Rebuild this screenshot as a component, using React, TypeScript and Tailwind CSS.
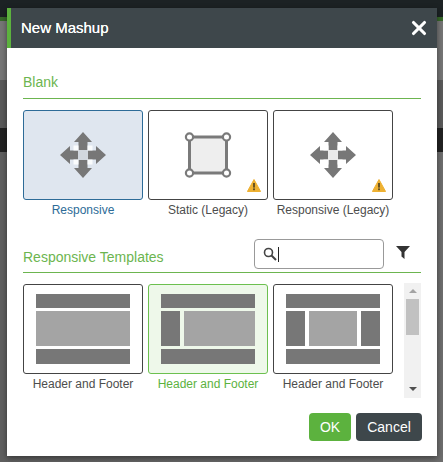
import { X } from 'lucide-react';

function MoveIcon() {
  return (
    <svg width="46" height="46" viewBox="0 0 46 46" fill="#777777">
      <path d="M23 0 L32 10 L27.5 10 L27.5 18 L18.5 18 L18.5 10 L14 10 Z" />
      <path d="M23 46 L32 36 L27.5 36 L27.5 28 L18.5 28 L18.5 36 L14 36 Z" />
      <path d="M0 23 L10 14 L10 18.5 L18 18.5 L18 27.5 L10 27.5 L10 32 Z" />
      <path d="M46 23 L36 14 L36 18.5 L28 18.5 L28 27.5 L36 27.5 L36 32 Z" />
      <rect x="18" y="18" width="10" height="10" fill="#9a9a9a" opacity="0.2" />
      <rect x="13.5" y="13.5" width="5" height="5" fill="#ffffff" opacity="0.85" />
      <rect x="27.5" y="13.5" width="5" height="5" fill="#ffffff" opacity="0.85" />
      <rect x="13.5" y="27.5" width="5" height="5" fill="#ffffff" opacity="0.85" />
      <rect x="27.5" y="27.5" width="5" height="5" fill="#ffffff" opacity="0.85" />
    </svg>
  );
}

function SquareIcon() {
  return (
    <svg width="48" height="48" viewBox="0 0 48 48">
      <rect x="5.5" y="6" width="37" height="36" fill="#eeeeee" stroke="#7a7a7a" strokeWidth="3" />
      {[
        [5.5, 6],
        [42.5, 6],
        [5.5, 42],
        [42.5, 42]
      ].map(([cx, cy]) => (
        <circle key={`${cx}-${cy}`} cx={cx} cy={cy} r="3.6" fill="#ffffff" stroke="#7a7a7a" strokeWidth="2.2" />
      ))}
    </svg>
  );
}

function Warning() {
  return (
    <svg className="absolute right-[6px] bottom-[7px]" width="14" height="13" viewBox="0 0 14 13">
      <path d="M7 0.5 L13.6 12.5 L0.4 12.5 Z" fill="#eeb132" stroke="#eeb132" strokeLinejoin="round" />
      <rect x="6.1" y="4" width="1.8" height="4.6" fill="#5a4a20" />
      <rect x="6.1" y="9.4" width="1.8" height="1.8" fill="#5a4a20" />
    </svg>
  );
}

function Tile({
  label,
  tone = 'plain',
  warn,
  children
}: {
  label: string;
  tone?: 'plain' | 'blue' | 'green';
  warn?: boolean;
  children: React.ReactNode;
}) {
  const box =
    tone === 'blue'
      ? 'bg-[#dfe6ef] border-[#2d6b97]'
      : tone === 'green'
        ? 'bg-[#eef8ea] border-[#6cc04f]'
        : 'bg-white border-[#444444]';
  const text = tone === 'blue' ? 'text-[#2d6b97]' : tone === 'green' ? 'text-[#5cb23e]' : 'text-[#4d4d4d]';
  return (
    <div className="w-[120px] shrink-0 flex flex-col items-center">
      <div className={`relative w-[120px] h-[90px] rounded-[3px] border flex items-center justify-center ${box}`}>
        {children}
        {warn && <Warning />}
      </div>
      <div className={`mt-[3px] text-[12px] leading-[14px] whitespace-nowrap ${text}`}>{label}</div>
    </div>
  );
}

function Dark({ className }: { className: string }) {
  return <div className={`bg-[#777777] ${className}`} />;
}

function Light({ className }: { className: string }) {
  return <div className={`bg-[#a4a4a4] ${className}`} />;
}

function Template({ kind }: { kind: 'full' | 'left' | 'both' }) {
  return (
    <div className="w-[94px] flex flex-col gap-[3px]">
      <Dark className="h-[14px]" />
      <div className="h-[35px] flex gap-[4px]">
        {kind !== 'full' && <Dark className="w-[19px]" />}
        <Light className="flex-1" />
        {kind === 'both' && <Dark className="w-[19px]" />}
      </div>
      <Dark className="h-[15px]" />
    </div>
  );
}

export default function App() {
  return (
    <div className="relative w-[443px] h-[462px] overflow-hidden bg-[#6f6f6f] font-['Liberation_Sans',Arial,sans-serif]">
      <div className="h-[17px] bg-[#1c2224]" />
      <div className="h-[4px] bg-[#37692a]" />
      <div className="h-[59px] bg-[#767676]" />
      <div className="h-[48px] bg-[#5a5a5a]" />
      <div className="h-[24px] bg-[#222222]" />
      <div className="h-[310px] bg-[linear-gradient(90deg,#5f5f5f,#6e6e6e)]" />

      <div className="absolute left-[7px] top-[8px] w-[430px] h-[448px] bg-white flex flex-col shadow-[0_2px_6px_rgba(0,0,0,0.45)]">
        <div className="h-[40px] shrink-0 bg-[#3e474b] border-l-[4px] border-[#5cb23e] flex items-center justify-between pl-[10px] pr-[7px]">
          <span className="text-[15px] font-medium text-white [text-shadow:0_0_0.5px_#fff]">New Mashup</span>
          <X className="w-[22px] h-[22px] text-white" strokeWidth={3.4} />
        </div>

        <div className="flex-1 px-[16px] pt-[24px] relative">
          <div className="h-[27px] border-b border-[#6cb54f] text-[14px] leading-[20px] text-[#6cb54f]">Blank</div>
          <div className="mt-[11px] flex gap-[5px]">
            <Tile label="Responsive" tone="blue">
              <MoveIcon />
            </Tile>
            <Tile label="Static (Legacy)" warn>
              <SquareIcon />
            </Tile>
            <Tile label="Responsive (Legacy)" warn>
              <MoveIcon />
            </Tile>
          </div>

          <div className="mt-[22px] h-[34px] border-b border-[#6cb54f] flex items-start relative">
            <span className="mt-[8px] text-[14px] leading-[20px] text-[#6cb54f]">Responsive Templates</span>
            <div className="absolute left-[231px] top-0 w-[130px] h-[30px] bg-white rounded-[4px] border border-[#999999] flex items-center pl-[8px]">
              <svg width="14" height="14" viewBox="0 0 14 14" fill="none" stroke="#444444" strokeWidth="1.6">
                <circle cx="5.5" cy="5.5" r="4" />
                <path d="M8.5 8.5 L13 13" strokeWidth="2" />
              </svg>
              <span className="ml-px w-px h-[15px] bg-[#222222]" />
            </div>
            <svg className="absolute left-[373px] top-[6px]" width="14" height="14" viewBox="0 0 14 14" fill="#333333">
              <path d="M0 1 H14 L8.5 7 V14 L5.5 11.5 V7 Z" />
            </svg>
          </div>

          <div className="mt-[11px] flex gap-[5px]">
            <Tile label="Header and Footer">
              <Template kind="full" />
            </Tile>
            <Tile label="Header and Footer" tone="green">
              <Template kind="left" />
            </Tile>
            <Tile label="Header and Footer">
              <Template kind="both" />
            </Tile>
            <div className="ml-[6px] -mt-[1px] w-[17px] h-[115px] bg-[#f1f1f1] flex flex-col items-center">
              <div className="mt-[6px] w-0 h-0 border-x-[4px] border-x-transparent border-b-[4px] border-b-[#a3a3a3]" />
              <div className="mt-[6px] w-[13px] h-[36px] bg-[#c1c1c1]" />
              <div className="mt-auto mb-[7px] w-0 h-0 border-x-[4px] border-x-transparent border-t-[4px] border-t-[#505050]" />
            </div>
          </div>

          <div className="mt-[15px] flex justify-end gap-[5px] -mr-[1px]">
            <button className="w-[42px] h-[28px] rounded-[4px] bg-[#5cb23e] text-white text-[14px]">OK</button>
            <button className="w-[66px] h-[28px] rounded-[4px] bg-[#3e474b] text-white text-[14px]">Cancel</button>
          </div>
        </div>
      </div>
    </div>
  );
}
